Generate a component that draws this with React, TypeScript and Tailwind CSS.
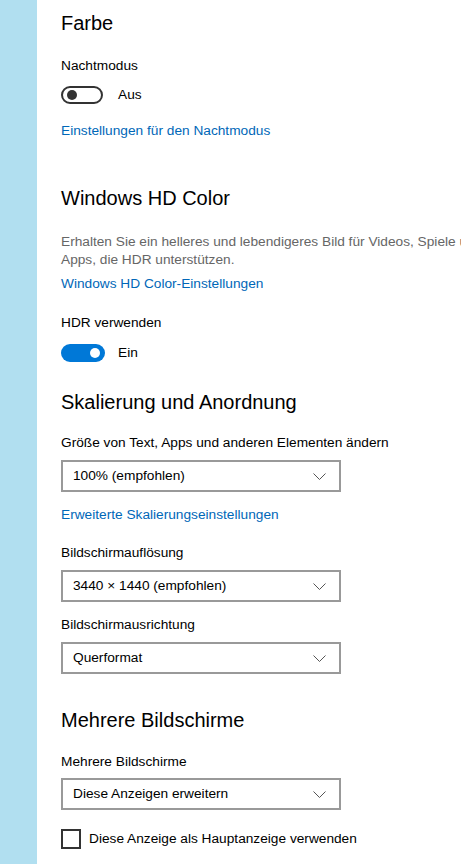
import React from "react";

const font = { fontFamily: '"Segoe UI", "Liberation Sans", Arial, sans-serif' };

function Chevron() {
  return (
    <svg width="13" height="7" viewBox="0 0 13 7" fill="none">
      <path d="M0.5 0.5 L6.5 6.5 L12.5 0.5" stroke="#555" strokeWidth="1" />
    </svg>
  );
}

function Dropdown({ value, className }: { value: string; className: string }) {
  return (
    <div
      className={`flex h-[32px] w-[280px] items-center justify-between border-2 border-[#999999] bg-white pl-[10px] pr-[13px] text-[13.7px] text-black ${className}`}
    >
      <span className="whitespace-nowrap">{value}</span>
      <Chevron />
    </div>
  );
}

function Label({ children, className }: { children: React.ReactNode; className: string }) {
  return (
    <div className={`h-[20px] whitespace-nowrap text-[13.7px] leading-[20px] text-black ${className}`}>{children}</div>
  );
}

function Heading({ children, className }: { children: React.ReactNode; className: string }) {
  return (
    <div className={`h-[28px] whitespace-nowrap text-[20px] leading-[28px] text-black ${className}`}>{children}</div>
  );
}

function LinkText({ children, className }: { children: React.ReactNode; className: string }) {
  return (
    <div className={`h-[20px] whitespace-nowrap text-[13.7px] leading-[20px] text-[#0067b8] ${className}`}>{children}</div>
  );
}

export default function App() {
  return (
    <div className="flex h-[864px] w-[461px] overflow-hidden bg-white" style={font}>
      <div className="h-full w-[37px] shrink-0 bg-[#b1dff0]" />
      <div className="flex min-w-0 flex-1 flex-col overflow-hidden pl-[24px]">
        <Heading className="mt-[9px]">Farbe</Heading>
        <Label className="mt-[19px]">Nachtmodus</Label>
        <div className="mt-[9px] flex h-[20px] items-center">
          <div className="flex h-[18px] w-[42px] items-center rounded-full border-2 border-[#333333] pl-[4px]">
            <div className="h-[10px] w-[10px] rounded-full bg-[#333333]" />
          </div>
          <span className="ml-[15px] text-[13.7px] text-black">Aus</span>
        </div>
        <LinkText className="mt-[16px]">Einstellungen für den Nachtmodus</LinkText>

        <Heading className="mt-[43px]">Windows HD Color</Heading>
        <div className="mt-[21px] whitespace-nowrap text-[13.7px] leading-[18px] text-[#666666]">
          <div>Erhalten Sie ein helleres und lebendigeres Bild für Videos, Spiele und</div>
          <div>Apps, die HDR unterstützen.</div>
        </div>
        <LinkText className="mt-[5px]">Windows HD Color-Einstellungen</LinkText>
        <Label className="mt-[19px]">HDR verwenden</Label>
        <div className="mt-[10px] flex h-[20px] items-center">
          <div className="flex h-[18px] w-[44px] items-center justify-end rounded-full bg-[#0078d7] pr-[5px]">
            <div className="h-[10px] w-[10px] rounded-full bg-white" />
          </div>
          <span className="ml-[13px] text-[13.7px] text-black">Ein</span>
        </div>

        <Heading className="mt-[25px]">Skalierung und Anordnung</Heading>
        <Label className="mt-[17px]">Größe von Text, Apps und anderen Elementen ändern</Label>
        <Dropdown className="mt-[7px]" value="100% (empfohlen)" />
        <LinkText className="mt-[13px]">Erweiterte Skalierungseinstellungen</LinkText>
        <Label className="mt-[18px]">Bildschirmauflösung</Label>
        <Dropdown className="mt-[7px]" value="3440 × 1440 (empfohlen)" />
        <Label className="mt-[13px]">Bildschirmausrichtung</Label>
        <Dropdown className="mt-[7px]" value="Querformat" />

        <Heading className="mt-[32px]">Mehrere Bildschirme</Heading>
        <Label className="mt-[18px]">Mehrere Bildschirme</Label>
        <Dropdown className="mt-[6px]" value="Diese Anzeigen erweitern" />
        <div className="mt-[19px] flex h-[20px] items-center">
          <div className="h-[20px] w-[20px] border-2 border-[#333333]" />
          <span className="ml-[8px] whitespace-nowrap text-[13.7px] text-black">
            Diese Anzeige als Hauptanzeige verwenden
          </span>
        </div>
      </div>
    </div>
  );
}
